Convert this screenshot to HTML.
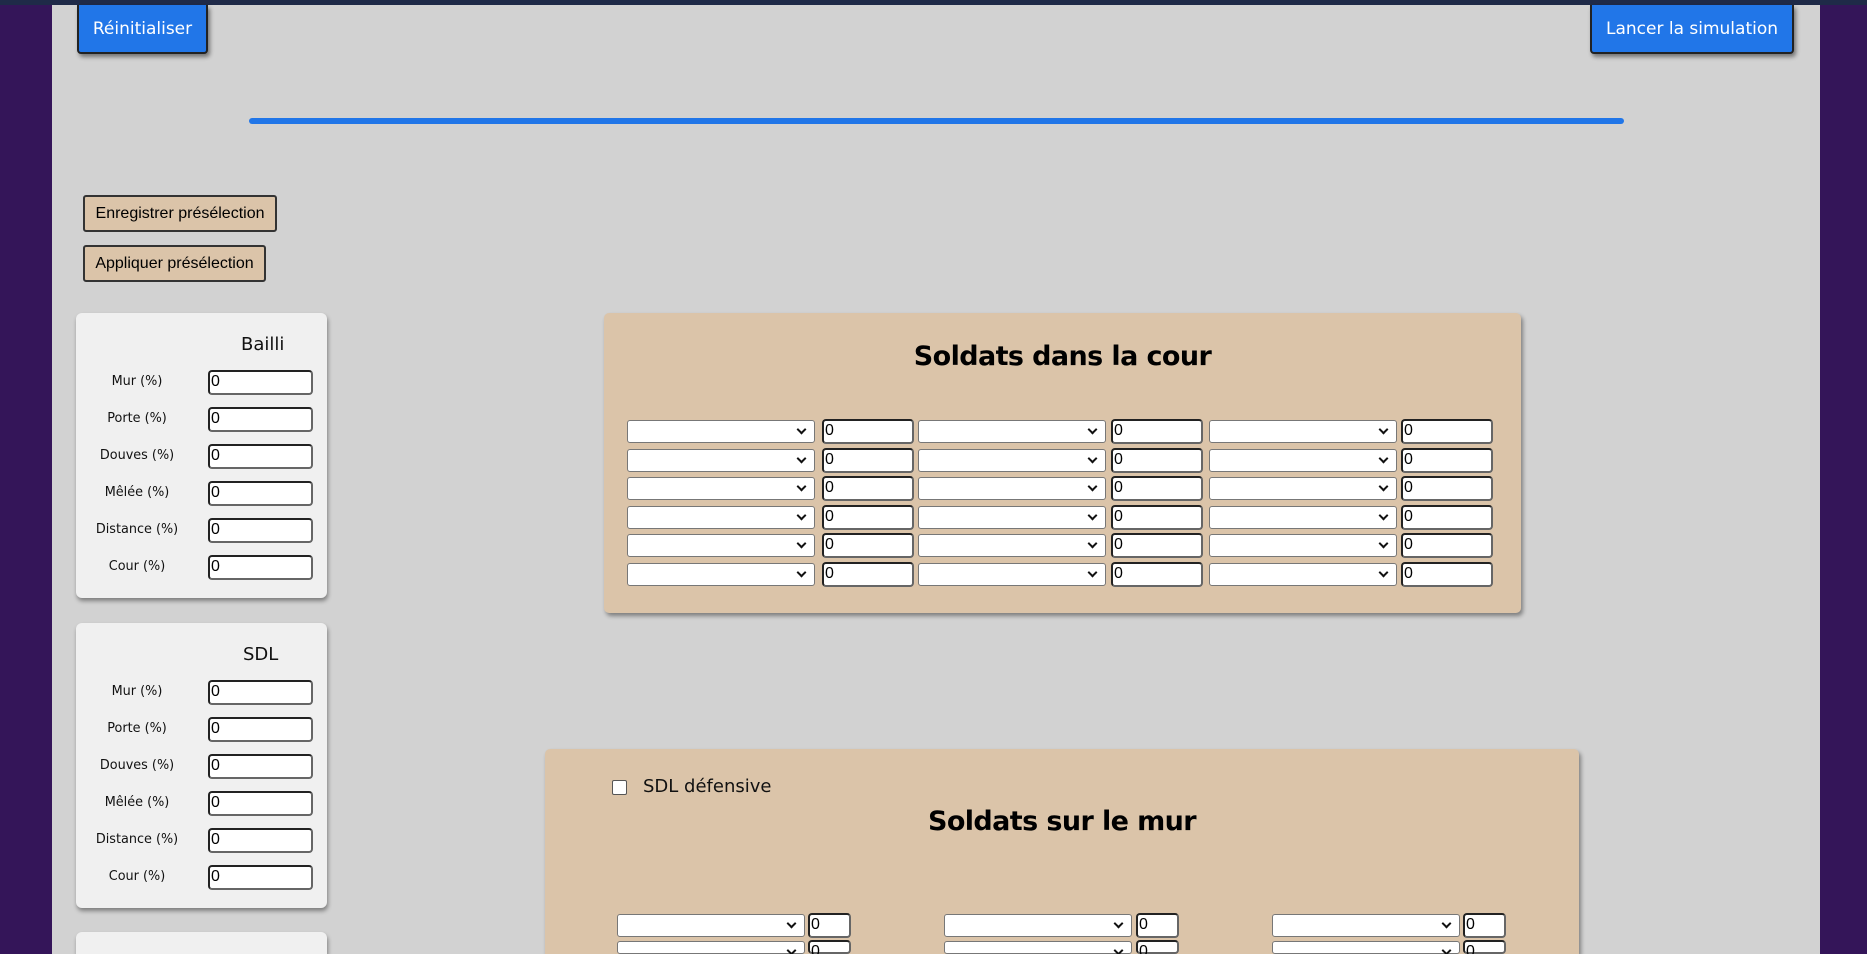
<!DOCTYPE html>
<html style="overflow:hidden;height:954px"><head><meta charset="utf-8"><style>
*{box-sizing:border-box;margin:0;padding:0}
html,body{width:1867px;height:954px;overflow:hidden}
body{background:#341559;font-family:"Liberation Sans","DejaVu Sans",sans-serif;position:relative}
.topbar{position:absolute;left:0;top:0;width:1867px;height:5px;background:#1f2a48}
.main{position:absolute;left:52px;top:5px;width:1768px;height:949px;background:#d2d2d2}
.a{position:absolute}
.bb{background:#2176e8;color:#fff;border:2px solid #222;border-top:none;border-radius:0 0 4px 4px;box-shadow:2px 3px 4px rgba(0,0,0,.45);display:flex;align-items:center;justify-content:center;font-family:"DejaVu Sans","Liberation Sans",sans-serif;font-size:17px}
.tb{background:#dbc4a9;border:2px solid #333;border-radius:3px;font-size:16px;color:#000;display:flex;align-items:center;justify-content:center}
.card{background:#f0f0f0;border-radius:6px;box-shadow:1px 3px 4px rgba(0,0,0,.4)}
.lbl{position:absolute;width:110px;text-align:center;font-size:13.5px;color:#111;font-family:"DejaVu Sans","Liberation Sans",sans-serif;transform:scaleX(.95)}
.inp{position:absolute;background:#fff;border:2px solid #222;border-radius:4px;border-right-color:#666;border-bottom-color:#666;font-size:16px;line-height:19px;padding-left:1px;color:#000}
.sel{position:absolute;background:#fff;border:1px solid #777;border-radius:3px}
.sel:after{content:"";position:absolute;right:9px;top:5px;width:5px;height:5px;border-right:2px solid #111;border-bottom:2px solid #111;transform:rotate(45deg)}
.panel{background:#dbc4a9;border-radius:5px;box-shadow:2px 3px 4px rgba(0,0,0,.4)}
.h{position:absolute;font-weight:bold;font-size:27px;color:#000;text-align:center;font-family:"DejaVu Sans","Liberation Sans",sans-serif;letter-spacing:-0.6px}
</style></head><body>
<div class="topbar"></div>
<div class="main"></div>
<div class="a bb" style="left:77px;top:5px;width:131px;height:49px">Réinitialiser</div>
<div class="a bb" style="left:1590px;top:5px;width:204px;height:49px">Lancer la simulation</div>
<div class="a" style="left:249px;top:118px;width:1375px;height:6px;background:#2176e8;border-radius:3px"></div>
<div class="a tb" style="left:83px;top:195px;width:194px;height:37px">Enregistrer présélection</div>
<div class="a tb" style="left:83px;top:245px;width:183px;height:37px">Appliquer présélection</div>

<div class="a card" style="left:76px;top:313px;width:251px;height:285px"></div>
<div class="a" style="left:241px;top:334px;font-size:18px;font-family:'DejaVu Sans',sans-serif;color:#111">Bailli</div>
<div class="a card" style="left:76px;top:623px;width:251px;height:285px"></div>
<div class="a" style="left:243px;top:644px;font-size:18px;font-family:'DejaVu Sans',sans-serif;color:#111">SDL</div>
<div class="a card" style="left:76px;top:932px;width:251px;height:22px;border-radius:6px 6px 0 0"></div>

<div class="a panel" style="left:604px;top:313px;width:917px;height:300px"></div>
<div class="h" style="left:604px;top:341px;width:917px">Soldats dans la cour</div>

<div class="a panel" style="left:545px;top:749px;width:1034px;height:205px;border-radius:5px 5px 0 0"></div>
<div class="a" style="left:612px;top:780px;width:15px;height:15px;background:#fff;border:1px solid #555;border-radius:2px"></div>
<div class="a" style="left:643px;top:776px;font-size:18px;font-family:'DejaVu Sans',sans-serif;color:#111">SDL défensive</div>
<div class="h" style="left:545px;top:806px;width:1034px">Soldats sur le mur</div>

<div id="g"></div>
<script>
var h='';
var labs=['Mur (%)','Porte (%)','Douves (%)','Mêlée (%)','Distance (%)','Cour (%)'];
[370,680].forEach(function(y0){
 for(var i=0;i<6;i++){var y=y0+i*37;
  h+='<div class="lbl" style="left:82px;top:'+(y+3)+'px">'+labs[i]+'</div>';
  h+='<div class="inp" style="left:208px;top:'+y+'px;width:105px;height:25px">0</div>';}
});
var sc=[[627,822],[918,1111],[1209,1401]];
for(var r=0;r<6;r++){var y=420+r*28.6;
 sc.forEach(function(c){
  h+='<div class="sel" style="left:'+c[0]+'px;top:'+y+'px;width:188px;height:23px"></div>';
  h+='<div class="inp" style="left:'+c[1]+'px;top:'+(y-1)+'px;width:92px;height:25px">0</div>';
 });}
var mc=[[617,808],[944,1136],[1272,1463]];
for(var r=0;r<2;r++){var y=914+r*27;
 mc.forEach(function(c){
  var hh=Math.min(23,954-y), hi=Math.min(25,954-y+1);
  h+='<div class="sel" style="left:'+c[0]+'px;top:'+y+'px;width:188px;height:'+hh+'px"></div>';
  h+='<div class="inp" style="left:'+c[1]+'px;top:'+(y-1)+'px;width:43px;height:'+hi+'px">0</div>';
 });}
document.getElementById('g').innerHTML=h;
</script>
</body></html>
